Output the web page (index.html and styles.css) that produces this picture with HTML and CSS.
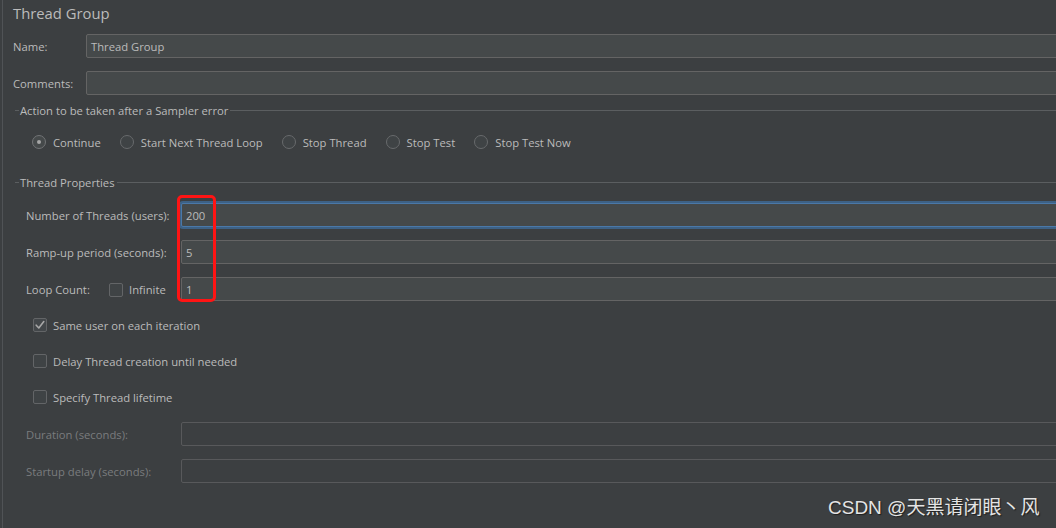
FILE: index.html
```html
<!DOCTYPE html>
<html>
<head>
<meta charset="utf-8">
<link rel="stylesheet" href="styles.css">
</head>
<body>
<div class="frame">
  <div class="title">Thread Group</div>

  <div class="row top-row first">
    <div class="lbl lbl-top">Name:</div>
    <div class="field">Thread Group</div>
  </div>
  <div class="row top-row">
    <div class="lbl lbl-top">Comments:</div>
    <div class="field"></div>
  </div>

  <div class="section s-action">
    <span class="dash"></span><span class="stitle">Action to be taken after a Sampler error</span><span class="sline"></span>
  </div>

  <div class="radios">
    <div class="opt"><span class="radio on"></span><span class="otext">Continue</span></div>
    <div class="opt"><span class="radio"></span><span class="otext">Start Next Thread Loop</span></div>
    <div class="opt"><span class="radio"></span><span class="otext">Stop Thread</span></div>
    <div class="opt"><span class="radio"></span><span class="otext">Stop Test</span></div>
    <div class="opt"><span class="radio"></span><span class="otext">Stop Test Now</span></div>
  </div>

  <div class="section s-props">
    <span class="dash"></span><span class="stitle">Thread Properties</span><span class="sline"></span>
  </div>

  <div class="props">
    <div class="prow p-first">
      <div class="lbl">Number of Threads (users):</div>
      <div class="field focus">200</div>
    </div>
    <div class="prow">
      <div class="lbl">Ramp-up period (seconds):</div>
      <div class="field">5</div>
    </div>
    <div class="prow">
      <div class="lbl loop">
        <span class="loop-lbl">Loop Count:</span>
        <span class="box"></span>
        <span class="inf">Infinite</span>
      </div>
      <div class="field">1</div>
    </div>
  </div>

  <div class="checks">
    <div class="crow c-first"><span class="box checked"><svg width="12" height="12" viewBox="0 0 12 12"><polyline points="2.2,6.2 4.8,9 9.8,2.6" fill="none" stroke="#a8a8a8" stroke-width="1.6" stroke-linecap="round" stroke-linejoin="round"/></svg></span><span class="otext">Same user on each iteration</span></div>
    <div class="crow"><span class="box"></span><span class="otext">Delay Thread creation until needed</span></div>
    <div class="crow"><span class="box"></span><span class="otext">Specify Thread lifetime</span></div>
  </div>

  <div class="props">
    <div class="prow d-first">
      <div class="lbl dis">Duration (seconds):</div>
      <div class="field disabled"></div>
    </div>
    <div class="prow">
      <div class="lbl dis">Startup delay (seconds):</div>
      <div class="field disabled"></div>
    </div>
  </div>
</div>

<div class="highlight"></div>
<div class="watermark">CSDN @天黑请闭眼丶风</div>
</body>
</html>
```

FILE: styles.css
```css
html, body {
  margin: 0;
  padding: 0;
  background: #3c3f41;
  overflow: hidden;
  width: 1056px;
  height: 528px;
}

body {
  position: relative;
  font-family: "Open Sans", "Noto Sans", sans-serif;
  font-size: 11.25px;
  color: #bbbbbb;
}

.frame {
  margin-left: 2px;
  border-left: 1px solid #505356;
  padding-left: 10px;
  width: 1100px;
  height: 528px;
  box-sizing: border-box;
}

.title {
  height: 26px;
  line-height: 26px;
  font-size: 14.8px;
  color: #bbbbbb;
}

.row {
  display: flex;
  height: 24px;
  margin-top: 13px;
}
.row.first { margin-top: 8px; }

.lbl {
  line-height: 24px;
  padding-top: 1px;
  box-sizing: border-box;
  white-space: nowrap;
}
.lbl-top { width: 73px; flex: none; }

.field {
  flex: 1;
  height: 24px;
  box-sizing: border-box;
  background: #45494a;
  border: 1px solid #646464;
  border-radius: 2px;
  padding-left: 4px;
  padding-top: 1px;
  line-height: 22px;
  color: #bbbbbb;
}
.field.focus {
  border-color: #4a78a8;
  box-shadow: 0 0 0 2px #3d6185;
}
.field.disabled {
  background: #3c3f41;
  border-color: #58595b;
}

.section {
  display: flex;
  align-items: center;
  height: 15px;
}
.s-action { margin-top: 8px; }
.s-props { margin-top: 21px; }
.dash {
  width: 4px;
  height: 1px;
  margin-left: 2px;
  background: #5b5e60;
}
.stitle {
  margin-left: 1px;
  margin-right: 2px;
  line-height: 15px;
  white-space: nowrap;
}
.sline {
  flex: 1;
  height: 1px;
  background: #5b5e60;
}

.radios {
  display: flex;
  align-items: center;
  height: 24px;
  margin-top: 12px;
  padding-left: 19px;
  gap: 19px;
}
.opt {
  display: flex;
  align-items: center;
  gap: 7px;
  white-space: nowrap;
}
.otext { padding-top: 1px; }
.radio {
  width: 14px;
  height: 14px;
  box-sizing: border-box;
  border: 1px solid #686a6c;
  border-radius: 50%;
  background: #3f4345;
  position: relative;
}
.radio.on {
  background: #45494a;
  border-color: #727476;
}
.radio.on::after {
  content: "";
  position: absolute;
  left: 4px;
  top: 4px;
  width: 4px;
  height: 4px;
  border-radius: 50%;
  background: #a6a6a6;
}

.props { padding-left: 13px; }
.prow {
  display: grid;
  grid-template-columns: 155px 1fr;
  height: 24px;
  margin-top: 13px;
}
.lbl.dis { color: #7a7c7e; }

.loop {
  display: flex;
  align-items: center;
}
.loop-lbl { width: 83px; }
.inf { margin-left: 6px; }

.box {
  width: 14px;
  height: 14px;
  box-sizing: border-box;
  border: 1px solid #636567;
  border-radius: 2px;
  background: #3f4345;
  display: inline-flex;
  align-items: center;
  justify-content: center;
  flex: none;
}
.box.checked { background: #43474a; }

.checks { padding-left: 20px; }
.crow {
  display: flex;
  align-items: center;
  gap: 6px;
  height: 24px;
  margin-top: 12px;
  white-space: nowrap;
}

.highlight {
  position: absolute;
  left: 177px;
  top: 195px;
  width: 39px;
  height: 107px;
  box-sizing: border-box;
  border: 3px solid #ff1414;
  border-radius: 5px;
}

.watermark {
  position: absolute;
  left: 828px;
  top: 496px;
  font-family: "Liberation Sans", "Noto Sans CJK SC", sans-serif;
  font-size: 19px;
  line-height: 24px;
  color: #e4e4e4;
  text-shadow: 1px 1px 1px #1e1e1e;
  white-space: nowrap;
}
```
